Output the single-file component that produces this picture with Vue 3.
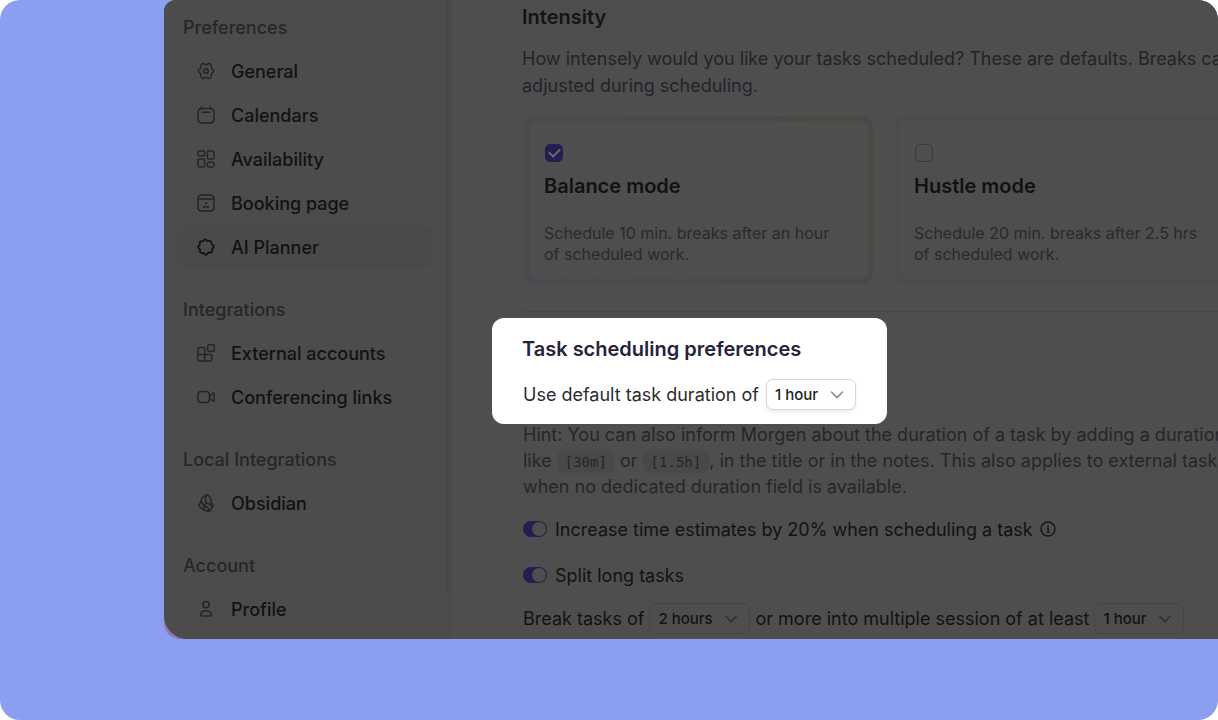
<script setup>
import { ref } from 'vue'

const groups = [
  {
    title: 'Preferences',
    items: [
      { label: 'General', icon: 'gear' },
      { label: 'Calendars', icon: 'calendar' },
      { label: 'Availability', icon: 'grid' },
      { label: 'Booking page', icon: 'booking' },
      { label: 'AI Planner', icon: 'planner', active: true }
    ]
  },
  {
    title: 'Integrations',
    items: [
      { label: 'External accounts', icon: 'blocks' },
      { label: 'Conferencing links', icon: 'video' }
    ]
  },
  { title: 'Local Integrations', items: [{ label: 'Obsidian', icon: 'stone' }] },
  { title: 'Account', items: [{ label: 'Profile', icon: 'person' }] }
]

const icons = {
  calendar: 'M5.2 2.4 H12.8 Q17 2.4 17 6.6 V12.8 Q17 17 12.8 17 H5.2 Q1 17 1 12.8 V6.6 Q1 2.4 5.2 2.4 Z M4.6 .8 V3 M13.4 .8 V3 M5.4 6.2 H12.6',
  grid: 'M2.4 1 H6.2 Q7.6 1 7.6 2.4 V4.4 Q7.6 5.8 6.2 5.8 H2.4 Q1 5.8 1 4.4 V2.4 Q1 1 2.4 1 Z M11.8 1 H15.6 Q17 1 17 2.4 V7.6 Q17 9 15.6 9 H11.8 Q10.4 9 10.4 7.6 V2.4 Q10.4 1 11.8 1 Z M2.4 9 H6.2 Q7.6 9 7.6 10.4 V15.6 Q7.6 17 6.2 17 H2.4 Q1 17 1 15.6 V10.4 Q1 9 2.4 9 Z M11.8 12.2 H15.6 Q17 12.2 17 13.6 V15.6 Q17 17 15.6 17 H11.8 Q10.4 17 10.4 15.6 V13.6 Q10.4 12.2 11.8 12.2 Z',
  booking: 'M4.8 1 H13.2 Q17 1 17 4.8 V13.2 Q17 17 13.2 17 H4.8 Q1 17 1 13.2 V4.8 Q1 1 4.8 1 Z M1.2 5 H16.8 M6.4 13 H11.6 M9 8.8 V9.8 M8.5 9.3 H9.5',
  planner: 'M8 1.4 Q9 1.2 9.6 2.4 Q10.4 3.6 12 3 Q14.4 2.4 14.6 4.8 Q14.4 6.2 15.6 7 Q17.6 8.2 16.2 9.8 Q14.8 10.8 15.2 12.4 Q15.4 14.8 13 14.6 Q11.4 14.2 10.6 15.4 Q9.4 17.6 7.8 16.2 Q6.8 14.8 5.4 15 Q2.8 15.2 3 12.8 Q3.4 11.4 2.2 10.6 Q.2 9.2 1.8 7.8 Q3.2 6.8 2.8 5.4 Q2.6 3 5 3.2 Q6.4 3.4 7 2.2 Q7.4 1.4 8 1.4 Z',
  blocks: 'M2.2 3.6 H6.2 Q7.8 3.6 7.8 5.2 V10.4 H13.2 Q14.8 10.4 14.8 12 V15.4 Q14.8 17 13.2 17 H2.2 Q.8 17 .8 15.4 V5.2 Q.8 3.6 2.2 3.6 Z M.8 10.4 H7.8 V17 M12.4 .8 H15.6 Q17.4 .8 17.4 2.6 V5.8 Q17.4 7.6 15.6 7.6 H12.4 Q10.6 7.6 10.6 5.8 V2.6 Q10.6 .8 12.4 .8 Z',
  video: 'M4.4 3.6 H9.2 Q12.4 3.6 12.4 6.8 V11.2 Q12.4 14.4 9.2 14.4 H4.4 Q1 14.4 1 11.2 V6.8 Q1 3.6 4.4 3.6 Z M12.4 8.4 L16 5.2 Q17.2 4.6 17.2 5.8 V12.2 Q17.2 13.4 16 12.8 L12.4 9.8',
  stone: 'M9.2 .9 Q10.2 .2 11 1 L13.2 3.6 Q13.8 4.4 13.8 5.4 L14 8 L15.8 11 Q16.2 11.8 15.6 12.6 L13.2 16.6 Q12.4 17.6 11.2 17.2 L6.6 15.8 Q5.8 15.6 5.2 15 L2.4 12.4 Q1.6 11.4 2.2 10.4 L4.2 7.6 L4.6 5 Q4.8 4 5.6 3.4 Z M9.4 1.4 Q7.8 5 8.8 8.8 L7 11.8 L4.4 8 M8.8 8.8 Q12.4 9 14.8 12.8 M7 11.8 Q7.8 13.8 6.4 15.6 M7 11.8 Q10.6 12 12.4 16.8',
  person: 'M9 1.4 A3.2 3.2 0 1 1 9 7.8 A3.2 3.2 0 1 1 9 1.4 Z M5.2 16 Q3.4 16 3.6 14.2 Q4.6 10.8 9 10.8 Q13.4 10.8 14.4 14.2 Q14.6 16 12.8 16 Z'
}

const mode = ref({ balance: true, hustle: false })
const modes = [
  { key: 'balance', name: 'Balance mode', lines: ['Schedule 10 min. breaks after an hour', 'of scheduled work.'] },
  { key: 'hustle', name: 'Hustle mode', lines: ['Schedule 20 min. breaks after 2.5 hrs', 'of scheduled work.'] }
]
const increase = ref(true)
const split = ref(true)
</script>

<template>
  <div class="stage">
    <div class="frame">
      <div class="window">
        <nav class="sidebar" aria-label="Settings">
          <section v-for="group in groups" :key="group.title" class="group">
            <h3 class="group-title">{{ group.title }}</h3>
            <a
              v-for="item in group.items"
              :key="item.label"
              href="#"
              class="nav-item"
              :class="{ active: item.active }"
            >
              <svg class="nav-icon" viewBox="0 0 18 18" aria-hidden="true">
                <template v-if="item.icon === 'gear'">
                  <path d="M7.7 2.6 H10.3 Q11.4 .7 13.4 2.2 Q15.1 3.7 14.1 5.5 L14.8 6.8 Q18.8 9 14.8 11.2 L14.1 12.5 Q15.1 14.3 13.4 15.8 Q11.4 17.3 10.3 15.4 H7.7 Q6.6 17.3 4.6 15.8 Q2.9 14.3 3.9 12.5 L3.2 11.2 Q-.8 9 3.2 6.8 L3.9 5.5 Q2.9 3.7 4.6 2.2 Q6.6 .7 7.7 2.6 Z" />
                  <circle cx="9" cy="9" r="2.3" />
                </template>
                <path v-else :d="icons[item.icon]" />
              </svg>
              <span>{{ item.label }}</span>
            </a>
          </section>
          <div class="scrollbar"></div>
        </nav>

        <main class="content">
          <h2 class="title">Intensity</h2>
          <p class="lead">
            How intensely would you like your tasks scheduled? These are defaults. Breaks can be<br />
            adjusted during scheduling.
          </p>

          <div class="cards">
            <label v-for="m in modes" :key="m.key" class="card" :class="{ selected: mode[m.key] }">
              <span class="card-body">
                <input v-model="mode[m.key]" type="checkbox" class="check" />
                <strong class="card-name">{{ m.name }}</strong>
                <span class="card-text">{{ m.lines[0] }}<br />{{ m.lines[1] }}</span>
              </span>
            </label>
          </div>

          <hr class="rule" />

          <section class="spotlight">
            <h2 class="title">Task scheduling preferences</h2>
            <div class="row">
              <label for="duration">Use default task duration of</label>
              <span class="picker">
                <select id="duration"><option>1 hour</option></select>
                <svg viewBox="0 0 14 8" aria-hidden="true"><path d="M1.5 1 L7 6.6 L12.5 1" /></svg>
              </span>
            </div>
          </section>

          <p class="hint">
            Hint: You can also inform Morgen about the duration of a task by adding a duration tag<br />
            like <code>[30m]</code> or <code>[1.5h]</code>, in the title or in the notes. This also applies to external tasks<br />
            when no dedicated duration field is available.
          </p>

          <div class="switch-row">
            <label class="switch-label">
              <input v-model="increase" type="checkbox" role="switch" class="switch" />
              Increase time estimates by 20% when scheduling a task
            </label>
            <button type="button" class="info" aria-label="More information">
              <svg viewBox="0 0 16 16" aria-hidden="true">
                <circle cx="8" cy="8" r="7" />
                <path d="M7 7.3 H8.2 V11.4 M6.8 11.4 H9.6" />
                <circle class="dot" cx="8" cy="4.8" r=".9" />
              </svg>
            </button>
          </div>
          <div class="switch-row">
            <label class="switch-label">
              <input v-model="split" type="checkbox" role="switch" class="switch" />
              Split long tasks
            </label>
          </div>

          <div class="row break-row">
            <label for="longer">Break tasks of</label>
            <span class="picker">
              <select id="longer"><option>2 hours</option></select>
              <svg viewBox="0 0 14 8" aria-hidden="true"><path d="M1.5 1 L7 6.6 L12.5 1" /></svg>
            </span>
            <label for="session">or more into multiple session of at least</label>
            <span class="picker">
              <select id="session"><option>1 hour</option></select>
              <svg viewBox="0 0 14 8" aria-hidden="true"><path d="M1.5 1 L7 6.6 L12.5 1" /></svg>
            </span>
          </div>
        </main>
      </div>
    </div>
  </div>
</template>

<style>
body {
  background: #fff;
}
</style>

<style scoped>
* {
  box-sizing: border-box;
}

.stage {
  display: flex;
  height: 100vh;
  padding: 0 0 81px 164px;
  overflow: hidden;
  border-radius: 20px;
  background: #8c9ef0;
  color: #121212;
  font-family: Inter, "Liberation Sans", sans-serif;
  font-size: 18px;
}

.frame {
  flex: 1;
  min-width: 0;
  border-radius: 12px 0 0 16px;
  background: #8c77b8;
}

.window {
  display: flex;
  height: 100%;
  overflow: hidden;
  border-radius: 12px 0 0 24px;
  background: #4e4e4e;
}

.sidebar {
  position: relative;
  display: flex;
  flex: 0 0 288px;
  flex-direction: column;
  gap: 19px;
  padding: 6px 17px 0 12px;
  border-right: 1px solid #494949;
  background: #4c4c4c;
}

.scrollbar {
  position: absolute;
  top: 0;
  right: 0;
  bottom: 44px;
  width: 6px;
  border-radius: 0 0 3px 3px;
  background: #484848;
}

.group {
  display: flex;
  flex-direction: column;
}

.group-title {
  margin: 0;
  padding-left: 7px;
  color: #262626;
  font-size: 18px;
  font-weight: 500;
  line-height: 43px;
}

.nav-item {
  display: flex;
  align-items: center;
  gap: 16px;
  height: 42px;
  margin: 1px 0;
  padding-left: 21px;
  border-radius: 10px;
  color: #121212;
  font-weight: 500;
  text-decoration: none;
}

.nav-item.active {
  background: #4a4a4a;
}

.nav-icon {
  width: 18px;
  height: 18px;
  fill: none;
  stroke: #252525;
  stroke-width: 1.5;
  stroke-linecap: round;
  stroke-linejoin: round;
}

.active .nav-icon {
  stroke: #121212;
  stroke-width: 1.8;
}

.content {
  flex: 1;
  min-width: 0;
  padding: 4px 0 0 70px;
  white-space: nowrap;
}

.title {
  margin: 0;
  color: #14131a;
  font-size: 20px;
  font-weight: 600;
  line-height: 26px;
}

.lead {
  margin: 15px 0 17px;
  color: #23232a;
  line-height: 27px;
}

.cards {
  display: flex;
  gap: 21px;
  margin-left: 2px;
}

.card {
  flex: 0 0 349px;
  padding: 5px;
  border-radius: 10px;
  background: #4c4c4c;
}

.card.selected {
  background: linear-gradient(60deg, #464b51, #494a49 20%, #474b47 45%, #464b43 75%, #484b41);
}

.card-body {
  display: flex;
  flex-direction: column;
  align-items: flex-start;
  padding: 23px 15px 14px;
  border-radius: 6px;
  background: #4e4e4e;
}

.check {
  display: grid;
  width: 18px;
  height: 18px;
  margin: 0 1px;
  place-content: center;
  border: 1px solid #3a3a3a;
  border-radius: 5px;
  appearance: none;
}

.check:checked {
  border-color: #231e51;
  background: #231e51;
}

.check:checked::before {
  width: 9px;
  height: 5px;
  margin-bottom: 3px;
  border-bottom: 2px solid #6a6a6a;
  border-left: 2px solid #6a6a6a;
  content: "";
  transform: rotate(-45deg);
}

.card-name {
  align-self: stretch;
  margin-bottom: 11px;
  padding: 12px 0 13px;
  border-bottom: 1px solid #494949;
  font-size: 20px;
  font-weight: 600;
  line-height: 24px;
}

.card-text {
  color: #2a2a2a;
  font-size: 16px;
  line-height: 21px;
}

.rule {
  height: 1px;
  margin: 27px 0 6px;
  border: 0;
  background: #484848;
}

.spotlight {
  width: fit-content;
  margin-left: -30px;
  padding: 18px 31px 14px 30px;
  border-radius: 12px;
  background: #fff;
  color: #2c2c2e;
}

.spotlight .title {
  margin-bottom: 17px;
  color: #26223a;
}

.row {
  display: flex;
  align-items: center;
  gap: 7px;
  padding-left: 1px;
}

.break-row {
  gap: 5px;
  margin-top: -5px;
}

.picker {
  position: relative;
  display: flex;
}

.picker select {
  height: 31px;
  padding: 0 36px 0 8px;
  border: 1px solid #454545;
  border-radius: 7px;
  background: transparent;
  color: #121212;
  font: 500 15px Inter, "Liberation Sans", sans-serif;
  appearance: none;
}

.picker svg {
  position: absolute;
  top: 12px;
  right: 12px;
  width: 14px;
  height: 8px;
  fill: none;
  stroke: #2e2e2e;
  stroke-width: 1.5;
  stroke-linecap: round;
  stroke-linejoin: round;
  pointer-events: none;
}

.spotlight select {
  border-color: #d6d6d6;
  background: #fff;
  box-shadow: 0 2px 4px rgba(0, 0, 0, 0.08);
  color: #222;
}

.spotlight .picker svg {
  stroke: #8a8a8a;
}

.hint {
  margin: -2px 0 16px 1px;
  color: #262626;
  line-height: 26px;
}

.hint code {
  padding: 3px 8px;
  border-radius: 6px;
  background: #494949;
  font-family: "DejaVu Sans Mono", monospace;
  font-size: 14px;
  line-height: 1;
}

.switch-row {
  display: flex;
  align-items: center;
  gap: 7px;
  height: 26px;
  margin: 0 0 20px 1px;
}

.switch-label {
  display: flex;
  align-items: center;
  gap: 8px;
}

.switch {
  display: flex;
  justify-content: flex-end;
  width: 24px;
  height: 16px;
  margin: 0;
  padding: 1px;
  border-radius: 8px;
  background: #231e51;
  appearance: none;
}

.switch::before {
  width: 14px;
  height: 14px;
  border-radius: 7px;
  background: #4e4e4e;
  content: "";
}

.switch:not(:checked) {
  justify-content: flex-start;
  background: #3a3a3a;
}

.info {
  display: flex;
  padding: 0;
  border: 0;
  background: none;
}

.info svg {
  width: 16px;
  height: 16px;
  fill: none;
  stroke: #161616;
  stroke-width: 1.4;
}

.info .dot {
  fill: #161616;
  stroke: none;
}
</style>
